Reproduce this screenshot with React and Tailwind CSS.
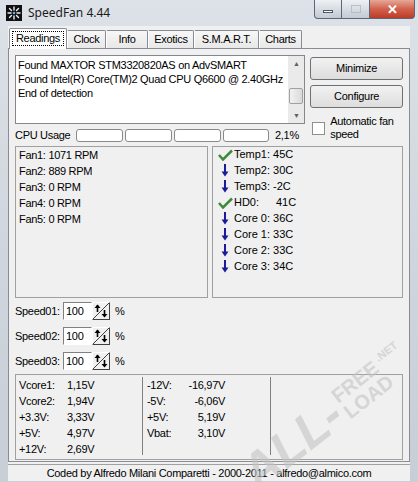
import React from 'react';

const fans = ['Fan1: 1071 RPM', 'Fan2: 889 RPM', 'Fan3: 0 RPM', 'Fan4: 0 RPM', 'Fan5: 0 RPM'];

const temps = [
    { ok: true, label: 'Temp1:', value: '45C' },
    { ok: false, label: 'Temp2:', value: '30C' },
    { ok: false, label: 'Temp3:', value: '-2C' },
    { ok: true, label: 'HD0:', value: '41C' },
    { ok: false, label: 'Core 0:', value: '36C' },
    { ok: false, label: 'Core 1:', value: '33C' },
    { ok: false, label: 'Core 2:', value: '33C' },
    { ok: false, label: 'Core 3:', value: '34C' },
];

const voltsLeft = [
    ['Vcore1:', '1,15V'],
    ['Vcore2:', '1,94V'],
    ['+3.3V:', '3,33V'],
    ['+5V:', '4,97V'],
    ['+12V:', '2,69V'],
];

const voltsRight = [
    ['-12V:', '-16,97V'],
    ['-5V:', '-6,06V'],
    ['+5V:', '5,19V'],
    ['Vbat:', '3,10V'],
];

const tabs = [
    { label: 'Clock', w: 'w-[39px]' },
    { label: 'Info', w: 'w-[42px]' },
    { label: 'Exotics', w: 'w-[46px]' },
    { label: 'S.M.A.R.T.', w: 'w-[65px]' },
    { label: 'Charts', w: 'w-[43px]' },
];

const FanIcon = () => (
    <svg width="16" height="16" viewBox="0 0 16 16">
        <rect width="16" height="16" fill="#111" />
        <g stroke="#e8eef5" strokeWidth="1.4" strokeLinecap="round">
            <line x1="8" y1="2" x2="8" y2="5" />
            <line x1="8" y1="11" x2="8" y2="14" />
            <line x1="2" y1="8" x2="5" y2="8" />
            <line x1="11" y1="8" x2="14" y2="8" />
            <line x1="3.5" y1="3.5" x2="5.5" y2="5.5" />
            <line x1="10.5" y1="10.5" x2="12.5" y2="12.5" />
            <line x1="12.5" y1="3.5" x2="10.5" y2="5.5" />
            <line x1="3.5" y1="12.5" x2="5.5" y2="10.5" />
        </g>
        <circle cx="8" cy="8" r="1.3" fill="#6aa8e8" />
    </svg>
);

const CheckIcon = () => (
    <svg width="15" height="12" viewBox="0 0 15 12">
        <path d="M1 6 L5 10.5 L14 1.5" fill="none" stroke="#3d8a3d" strokeWidth="2.5" />
    </svg>
);

const DownIcon = () => (
    <svg width="8" height="13" viewBox="0 0 8 13">
        <line x1="4" y1="0" x2="4" y2="9" stroke="#1b1b9a" strokeWidth="2" />
        <path d="M0.5 7.5 L4 12.5 L7.5 7.5 Z" fill="#1b1b9a" />
    </svg>
);

const Spinner = () => (
    <div className="w-[18px] h-[18px] bg-[#f0f0f0] border border-t-white border-l-white border-b-[#404040] border-r-[#404040] flex">
        <svg width="16" height="16" viewBox="0 0 16 16">
            <line x1="0" y1="16" x2="16" y2="0" stroke="#404040" strokeWidth="1" />
            <line x1="4.5" y1="2" x2="4.5" y2="9" stroke="#000" strokeWidth="1.6" />
            <path d="M1.5 5 L4.5 1.5 L7.5 5 Z" fill="#000" />
            <line x1="11.5" y1="7" x2="11.5" y2="13" stroke="#000" strokeWidth="1.6" />
            <path d="M8.5 11 L11.5 14.5 L14.5 11 Z" fill="#000" />
        </svg>
    </div>
);

const SpeedRow = ({ label }) => (
    <div className="flex items-center h-[18px]">
        <span className="w-[48px]">{label}</span>
        <div className="w-[29px] h-[18px] bg-white border border-t-[#808080] border-l-[#808080] border-b-white border-r-white flex items-center pl-[2px]">
            100
        </div>
        <Spinner />
        <span className="ml-[5px]">%</span>
    </div>
);

const WinButton = ({ className, children }) => (
    <div className={`h-[19px] border border-t-0 border-[#5b6776] flex items-center justify-center ${className}`}>
        {children}
    </div>
);

export default function App() {
    return (
        <div
            className="w-[418px] h-[482px] relative overflow-hidden bg-gradient-to-b from-[#dde2e8] via-[#d0d6dd] to-[#c8ced5] text-[11px] tracking-[-0.3px] text-black leading-none whitespace-nowrap"
            style={{ fontFamily: '"Liberation Sans", Arial, sans-serif' }}
        >
            {/* Title bar */}
            <div className="h-[26px] flex items-center pl-[6px]">
                <FanIcon />
                <span className="ml-[6px] text-[12px] tracking-normal text-[#1b1b1b]" style={{ fontFamily: '"Noto Sans", sans-serif' }}>
                    SpeedFan 4.44
                </span>
            </div>
            <div className="absolute top-0 left-[314px] flex">
                <WinButton className="w-[28px] rounded-bl-[4px] bg-gradient-to-b from-[#eef1f4] to-[#c3cad3]">
                    <div className="w-[10px] h-[3px] bg-white border border-[#4d5866] mt-[5px]" />
                </WinButton>
                <WinButton className="w-[28px] border-l-0 bg-gradient-to-b from-[#eef1f4] to-[#c3cad3]">
                    <div className="w-[10px] h-[8px] border border-[#a8b0ba] opacity-70" />
                </WinButton>
                <WinButton className="w-[45px] border-l-0 rounded-br-[4px] bg-gradient-to-b from-[#e7a796] via-[#d0614d] to-[#bf3a25]">
                    <span className="text-white text-[13px] font-bold">✕</span>
                </WinButton>
            </div>

            {/* Client area */}
            <div className="absolute left-[8px] top-[26px] w-[402px] h-[455px] bg-[#f0f0f0]">
                {/* Tabs */}
                <div className="flex items-end h-[22px] pl-[1px]">
                    <div className="w-[58px] h-[21px] px-[2px] pt-[2px] bg-white border border-b-0 border-[#898c95] rounded-t-[2px] relative z-10 -mb-px">
                        <div className="border border-dotted border-black h-[15px] flex items-center justify-center">Readings</div>
                    </div>
                    {tabs.map((t) => (
                        <div
                            key={t.label}
                            className={`${t.w} h-[18px] flex items-center justify-center bg-gradient-to-b from-[#f7f7f7] to-[#e8e8e8] border border-b-0 border-l-white border-[#898c95] rounded-tr-[2px]`}
                        >
                            {t.label}
                        </div>
                    ))}
                </div>

                {/* Tab panel */}
                <div className="w-[402px] h-[414px] border border-[#898c95] px-[6px] pt-[6px] flex flex-col overflow-hidden">
                    <div className="flex h-[87px]">
                        <div className="w-[294px] flex flex-col">
                            <div className="h-[69px] bg-white border border-[#828790] flex">
                                <div className="flex-1 pl-[2px] pt-[4px] flex flex-col gap-[3px]">
                                    <span>Found MAXTOR STM3320820AS on AdvSMART</span>
                                    <span>Found Intel(R) Core(TM)2 Quad CPU Q6600 @ 2.40GHz</span>
                                    <span>End of detection</span>
                                </div>
                                <div className="w-[16px] bg-[#eaeaea] flex flex-col items-center">
                                    <span className="text-[7px] text-[#606060] mt-[4px]">▲</span>
                                    <div className="w-[14px] h-[16px] mt-[21px] bg-gradient-to-r from-[#f2f2f2] to-[#dadada] border border-[#a0a0a0] rounded-[2px]" />
                                    <span className="text-[7px] text-[#606060] mt-auto mb-[4px]">▼</span>
                                </div>
                            </div>
                            <div className="flex items-center mt-[4px] h-[14px]">
                                <span className="w-[61px]">CPU Usage</span>
                                <div className="flex gap-[2px]">
                                    <div className="w-[47px] h-[13px] border border-[#8a8a8a] rounded-[3px] bg-white" />
                                    <div className="w-[47px] h-[13px] border border-[#8a8a8a] rounded-[3px] bg-white" />
                                    <div className="w-[47px] h-[13px] border border-[#8a8a8a] rounded-[3px] bg-white" />
                                    <div className="w-[46px] h-[13px] border border-[#8a8a8a] rounded-[3px] bg-white" />
                                </div>
                                <span className="ml-[6px]">2,1%</span>
                            </div>
                        </div>
                        <div className="ml-[5px] w-[94px] flex flex-col">
                            <div className="h-[23px] mt-[2px] rounded-[3px] border border-[#707070] bg-gradient-to-b from-[#f2f2f2] to-[#dddddd] flex items-center justify-center">
                                Minimize
                            </div>
                            <div className="h-[23px] mt-[5px] rounded-[3px] border border-[#707070] bg-gradient-to-b from-[#f2f2f2] to-[#dddddd] flex items-center justify-center">
                                Configure
                            </div>
                            <div className="flex mt-[8px] pl-[2px]">
                                <div className="w-[13px] h-[13px] mt-[6px] border border-[#8e8f8f] bg-white shrink-0" />
                                <div className="ml-[5px] flex flex-col gap-[2px]">
                                    <span>Automatic fan</span>
                                    <span>speed</span>
                                </div>
                            </div>
                        </div>
                    </div>

                    {/* Fans and temperatures */}
                    <div className="flex gap-[4px] mt-[4px]">
                        <div className="w-[196px] h-[152px] border border-[#a0a0a0] pl-[3px] pt-[3px] flex flex-col gap-[5px]">
                            {fans.map((f) => (
                                <span key={f} className="h-[11px]">{f}</span>
                            ))}
                        </div>
                        <div className="w-[194px] h-[152px] border border-[#a0a0a0] pl-[4px] pt-[1px] flex flex-col gap-[3px] tracking-normal">
                            {temps.map((t) => (
                                <div key={t.label} className="flex items-center h-[13px]">
                                    <div className="w-[17px] flex justify-center">
                                        {t.ok ? <CheckIcon /> : <DownIcon />}
                                    </div>
                                    <span className={t.label === 'HD0:' ? 'w-[42px]' : 'mr-[3px]'}>{t.label}</span>
                                    <span>{t.value}</span>
                                </div>
                            ))}
                        </div>
                    </div>

                    {/* Fan speeds */}
                    <div className="flex flex-col gap-[7px] mt-[4px]">
                        <SpeedRow label="Speed01:" />
                        <SpeedRow label="Speed02:" />
                        <SpeedRow label="Speed03:" />
                    </div>

                    {/* Voltages */}
                    <div className="mt-[4px] h-[86px] border border-[#a0a0a0] flex">
                        <div className="w-[126px] pl-[3px] pt-[5px] flex flex-col gap-[5px]">
                            {voltsLeft.map(([l, v]) => (
                                <div key={l} className="flex h-[11px]">
                                    <span className="w-[48px]">{l}</span>
                                    <span>{v}</span>
                                </div>
                            ))}
                        </div>
                        <div className="w-px h-[78px] mt-[2px] bg-[#808080]" />
                        <div className="w-[127px] pl-[4px] pr-[45px] pt-[5px] flex flex-col gap-[5px]">
                            {voltsRight.map(([l, v]) => (
                                <div key={l} className="flex justify-between h-[11px]">
                                    <span>{l}</span>
                                    <span>{v}</span>
                                </div>
                            ))}
                        </div>
                        <div className="w-px h-[78px] mt-[2px] bg-[#808080]" />
                    </div>
                </div>

                {/* Status bar */}
                <div className="mt-[2px] h-[17px] border-t border-[#a0a0a0] flex items-center justify-center">
                    Coded by Alfredo Milani Comparetti - 2000-2011 - alfredo@almico.com
                </div>
            </div>

            {/* Site stamp over the lower right corner */}
            <div className="absolute left-[226px] top-[392px] -rotate-[38deg] flex items-center gap-[4px] text-[#c4c4c4] opacity-60 font-bold tracking-normal pointer-events-none">
                <span className="text-[50px] italic">ALL-</span>
                <div className="flex flex-col leading-none">
                    <div className="flex items-start gap-[4px]">
                        <span className="text-[20px]">FREE</span>
                        <span className="text-[11px]">.NET</span>
                    </div>
                    <span className="text-[20px]">LOAD</span>
                </div>
            </div>
        </div>
    );
}
